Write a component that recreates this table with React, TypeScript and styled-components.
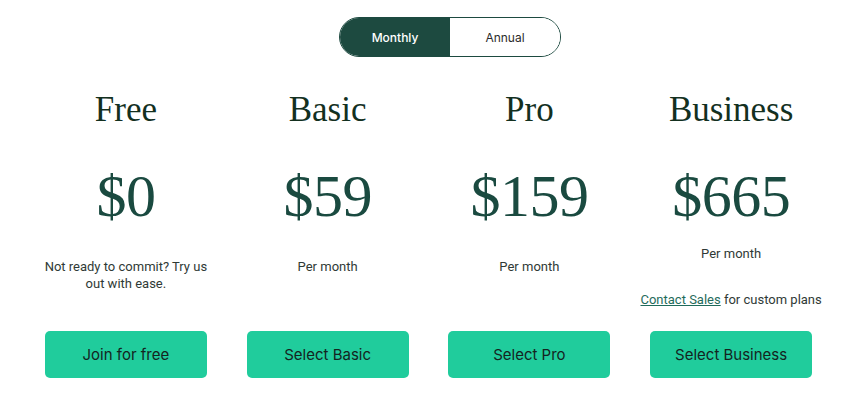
import React from "react";
import styled, { createGlobalStyle } from "styled-components";

const Global = createGlobalStyle`
  html, body { margin: 0; padding: 0; background: #ffffff; }
  body { font-family: Inter, "Liberation Sans", sans-serif; }
`;

const Page = styled.div`
  width: 842px;
  padding-top: 17px;
  box-sizing: border-box;
`;

const ToggleRow = styled.div`
  display: flex;
  justify-content: center;
  padding-left: 58px;
`;

const Toggle = styled.div`
  display: flex;
  width: 222px;
  height: 40px;
  border: 1px solid #1d4a40;
  border-radius: 20px;
  overflow: hidden;
  box-sizing: border-box;
`;

const ToggleOption = styled.button<{ $active?: boolean }>`
  flex: 1;
  border: none;
  margin: 0;
  padding: 0;
  font-family: Inter, "Liberation Sans", sans-serif;
  font-size: 12px;
  font-weight: ${(p) => (p.$active ? 500 : 400)};
  background: ${(p) => (p.$active ? "#1d4a40" : "#ffffff")};
  color: ${(p) => (p.$active ? "#ffffff" : "#2b2b2b")};
  cursor: pointer;
`;

const Plans = styled.div`
  display: grid;
  grid-template-columns: repeat(4, 1fr);
  padding: 0 10px 0 25px;
  margin-top: 32px;
`;

const Card = styled.div`
  display: flex;
  flex-direction: column;
  align-items: center;
`;

const Title = styled.h2`
  margin: 0;
  font-family: "Liberation Serif", serif;
  font-weight: 400;
  font-size: 35px;
  line-height: 42px;
  color: #13301f;
`;

const Price = styled.div`
  margin-top: 30px;
  font-family: "Liberation Serif", serif;
  font-size: 60px;
  line-height: 70px;
  color: #1a4a40;
  letter-spacing: -0.5px;
`;

const Info = styled.div<{ $compact?: boolean }>`
  box-sizing: border-box;
  height: 100px;
  padding-top: ${(p) => (p.$compact ? "14px" : "27px")};
  display: flex;
  flex-direction: column;
  align-items: center;
`;

const Desc = styled.p<{ $gap?: number }>`
  margin: ${(p) => (p.$gap ?? 0)}px 0 0;
  max-width: 172px;
  text-align: center;
  font-family: Roboto, "Liberation Sans", sans-serif;
  font-size: 13px;
  line-height: 17px;
  color: #2f3a36;
`;

const WideDesc = styled(Desc)`
  max-width: none;
  white-space: nowrap;
`;

const Link = styled.a`
  color: #1f6b5b;
  text-decoration: underline;
`;

const CTA = styled.button`
  width: 162px;
  height: 47px;
  border: none;
  border-radius: 5px;
  background: #20cc9c;
  color: #14241f;
  font-family: Inter, "Liberation Sans", sans-serif;
  font-size: 15px;
  cursor: pointer;
`;

const plans = [
  { name: "Free", price: "$0", desc: "Not ready to commit? Try us out with ease.", cta: "Join for free" },
  { name: "Basic", price: "$59", desc: "Per month", cta: "Select Basic" },
  { name: "Pro", price: "$159", desc: "Per month", cta: "Select Pro" },
  { name: "Business", price: "$665", desc: "Per month", cta: "Select Business", contact: true },
];

export default function App() {
  return (
    <Page>
      <Global />
      <ToggleRow>
        <Toggle>
          <ToggleOption $active>Monthly</ToggleOption>
          <ToggleOption>Annual</ToggleOption>
        </Toggle>
      </ToggleRow>
      <Plans>
        {plans.map((p) => (
          <Card key={p.name}>
            <Title>{p.name}</Title>
            <Price>{p.price}</Price>
            <Info $compact={p.contact}>
              <Desc>{p.desc}</Desc>
              {p.contact && (
                <WideDesc $gap={29}>
                  <Link href="#">Contact Sales</Link> for custom plans
                </WideDesc>
              )}
            </Info>
            <CTA>{p.cta}</CTA>
          </Card>
        ))}
      </Plans>
    </Page>
  );
}
